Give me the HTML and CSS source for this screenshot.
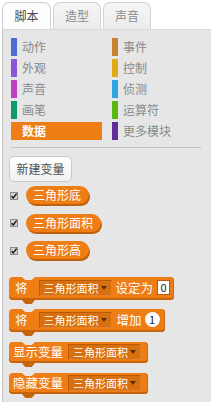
FILE: index.html
```html
<!DOCTYPE html>
<html lang="zh">
<head>
<meta charset="utf-8">
<link rel="stylesheet" href="styles.css">
</head>
<body>
<div class="tabs">
  <div class="tab tab-active">脚本</div>
  <div class="tab">造型</div>
  <div class="tab">声音</div>
</div>
<div class="panel">
  <div class="cats">
    <div class="cat"><span class="bar c-motion"></span><span class="lbl">动作</span></div>
    <div class="cat"><span class="bar c-events"></span><span class="lbl">事件</span></div>
    <div class="cat"><span class="bar c-looks"></span><span class="lbl">外观</span></div>
    <div class="cat"><span class="bar c-control"></span><span class="lbl">控制</span></div>
    <div class="cat"><span class="bar c-sound"></span><span class="lbl">声音</span></div>
    <div class="cat"><span class="bar c-sensing"></span><span class="lbl">侦测</span></div>
    <div class="cat"><span class="bar c-pen"></span><span class="lbl">画笔</span></div>
    <div class="cat"><span class="bar c-ops"></span><span class="lbl">运算符</span></div>
    <div class="cat cat-sel"><span class="bar c-data"></span><span class="lbl">数据</span></div>
    <div class="cat"><span class="bar c-more"></span><span class="lbl">更多模块</span></div>
  </div>
  <div class="divider"></div>
  <button class="newvar">新建变量</button>
  <div class="vars">
    <div class="varrow">
      <svg class="chk" width="8" height="8" viewBox="0 0 8 8"><rect x="0.5" y="0.5" width="7" height="7" fill="#cfcfcf" stroke="#8c8c8c"/><path d="M1.6 4.2 L3.2 6 L6.6 1.6" fill="none" stroke="#111" stroke-width="1.3"/></svg>
      <span class="pill">三角形底</span>
    </div>
    <div class="varrow">
      <svg class="chk" width="8" height="8" viewBox="0 0 8 8"><rect x="0.5" y="0.5" width="7" height="7" fill="#cfcfcf" stroke="#8c8c8c"/><path d="M1.6 4.2 L3.2 6 L6.6 1.6" fill="none" stroke="#111" stroke-width="1.3"/></svg>
      <span class="pill">三角形面积</span>
    </div>
    <div class="varrow">
      <svg class="chk" width="8" height="8" viewBox="0 0 8 8"><rect x="0.5" y="0.5" width="7" height="7" fill="#cfcfcf" stroke="#8c8c8c"/><path d="M1.6 4.2 L3.2 6 L6.6 1.6" fill="none" stroke="#111" stroke-width="1.3"/></svg>
      <span class="pill">三角形高</span>
    </div>
  </div>
  <div class="blocks">
    <div class="blk blk-tall">
      <span class="btxt w-jiang">将</span>
      <span class="dd">三角形面积<i class="arrow"></i></span>
      <span class="btxt w-set">设定为</span>
      <span class="num">0</span>
    </div>
    <div class="blk blk-tall">
      <span class="btxt w-jiang">将</span>
      <span class="dd">三角形面积<i class="arrow"></i></span>
      <span class="btxt w-add">增加</span>
      <span class="round">1</span>
    </div>
    <div class="blk blk-short">
      <span class="btxt w-show">显示变量</span>
      <span class="dd">三角形面积<i class="arrow"></i></span>
    </div>
    <div class="blk blk-short">
      <span class="btxt w-show">隐藏变量</span>
      <span class="dd">三角形面积<i class="arrow"></i></span>
    </div>
  </div>
</div>
</body>
</html>
```
FILE: styles.css
```css
* { box-sizing: border-box; }
html, body { margin: 0; padding: 0; background: #ffffff; }
body {
  width: 211px;
  height: 407px;
  overflow: hidden;
  font-family: "Noto Sans CJK SC", "Noto Sans", sans-serif;
}
.tabs {
  display: flex;
  gap: 2px;
  padding: 2px 0 0 2px;
  height: 29px;
}
.tab {
  width: 48px;
  height: 27px;
  border: 1px solid #d2d2d2;
  border-bottom: none;
  border-radius: 7px 7px 0 0;
  background: linear-gradient(#f5f5f5, #ececec);
  color: #8a8a8a;
  font-size: 12px;
  line-height: 26px;
  text-align: center;
}
.tab-active {
  width: 49px;
  background: #fdfdfd;
  color: #4a4a4a;
  border-color: #cfcfcf;
}
.panel {
  margin-left: 2px;
  height: 373px;
  background: #e5e6e5;
  border-left: 1px solid #c4c4c4;
  border-top: 1px solid #d8d8d8;
  padding: 8px 0 0 6px;
}
.cats {
  margin-left: 2px;
  display: grid;
  grid-template-columns: 91px 91px;
  column-gap: 10px;
  row-gap: 3px;
}
.cat {
  display: flex;
  height: 18px;
  align-items: stretch;
}
.bar { width: 6px; }
.lbl {
  margin-left: 5px;
  font-size: 12px;
  line-height: 18px;
  color: #8a8a8a;
}
.cat-sel { background: #ee7d16; }
.cat-sel .lbl { color: #ffffff; font-weight: bold; }
.c-motion { background: #4a6cd4; }
.c-looks { background: #8a55d7; }
.c-sound { background: #bb42c3; }
.c-pen { background: #0e9a6c; }
.c-data { background: #ee7d16; }
.c-events { background: #c88330; }
.c-control { background: #e1a91a; }
.c-sensing { background: #2ca5e2; }
.c-ops { background: #5cb712; }
.c-more { background: #632d99; }
.divider {
  margin: 7px 10px 0 2px;
  height: 1px;
  background: #c2c2c2;
}
.newvar {
  display: block;
  margin: 8px 0 0 0;
  width: 63px;
  height: 26px;
  padding: 0;
  border: 1px solid #cacaca;
  border-radius: 5px;
  background: linear-gradient(#ffffff, #f1f1f1);
  color: #4f4f4f;
  font-family: "Noto Sans CJK SC", "Noto Sans", sans-serif;
  font-size: 12px;
  line-height: 24px;
}
.vars {
  margin-top: 4px;
  display: flex;
  flex-direction: column;
  gap: 7.5px;
}
.varrow {
  display: flex;
  align-items: center;
  height: 20px;
}
.chk { margin-left: 1px; margin-top: -1px; display: block; }
.pill {
  margin-left: 8px;
  margin-bottom: 2px;
  height: 18px;
  padding: 0 8px 0 7px;
  border-radius: 9px;
  background: #ee7d16;
  box-shadow: 1px 2px 0 #c0600b;
  color: #ffffff;
  font-size: 12px;
  line-height: 18px;
}
.blocks {
  margin-top: 16px;
  display: flex;
  flex-direction: column;
  align-items: flex-start;
  gap: 9px;
}
.blocks .blk-short { margin-top: 1px; }
.blk {
  position: relative;
  display: flex;
  align-items: center;
  background: #ee7d16;
  border-radius: 4px;
  box-shadow: inset 0 -2px 0 #c5640b, inset -1px 0 0 #d06a0e;
  padding: 0 4px 2px 6px;
}
.blk-tall { height: 23px; }
.blk-short { height: 21px; padding-left: 4px; padding-right: 7px; }
.blk::before {
  content: "";
  position: absolute;
  top: 0;
  left: 13px;
  width: 13px;
  height: 3px;
  background: #e5e6e5;
  clip-path: polygon(0 0, 100% 0, 75% 100%, 25% 100%);
}
.blk::after {
  content: "";
  position: absolute;
  bottom: -4px;
  left: 13px;
  width: 13px;
  height: 4px;
  background: #c5640b;
  clip-path: polygon(0 0, 100% 0, 75% 100%, 25% 100%);
}
.btxt {
  color: #ffffff;
  font-size: 12.5px;
  line-height: 16px;
  white-space: nowrap;
}
.w-jiang { margin-left: 0; margin-right: 11px; }
.w-set { margin: 0 4px 0 4px; }
.w-add { margin: 0 3px 0 5px; }
.w-show { margin-left: 0; margin-right: 5px; }
.dd {
  display: flex;
  align-items: center;
  width: 73px;
  height: 16px;
  padding-left: 4px;
  background: #d9700f;
  border: 1px solid #b85a06;
  border-right-color: #e0802a;
  border-bottom-color: #e0802a;
  color: #ffffff;
  font-size: 11px;
  line-height: 14px;
  white-space: nowrap;
}
.arrow {
  margin-left: auto;
  margin-right: 4px;
  width: 0;
  height: 0;
  border-left: 3.5px solid transparent;
  border-right: 3.5px solid transparent;
  border-top: 4px solid #5a2c00;
}
.num {
  width: 13px;
  height: 15px;
  background: #ffffff;
  border: 1px solid #b55b08;
  color: #222;
  font-size: 11px;
  line-height: 13px;
  text-align: center;
}
.round {
  width: 15px;
  height: 15px;
  border-radius: 8px;
  background: #ffffff;
  color: #222;
  font-size: 11px;
  line-height: 15px;
  text-align: center;
  margin-right: 1px;
}
```
